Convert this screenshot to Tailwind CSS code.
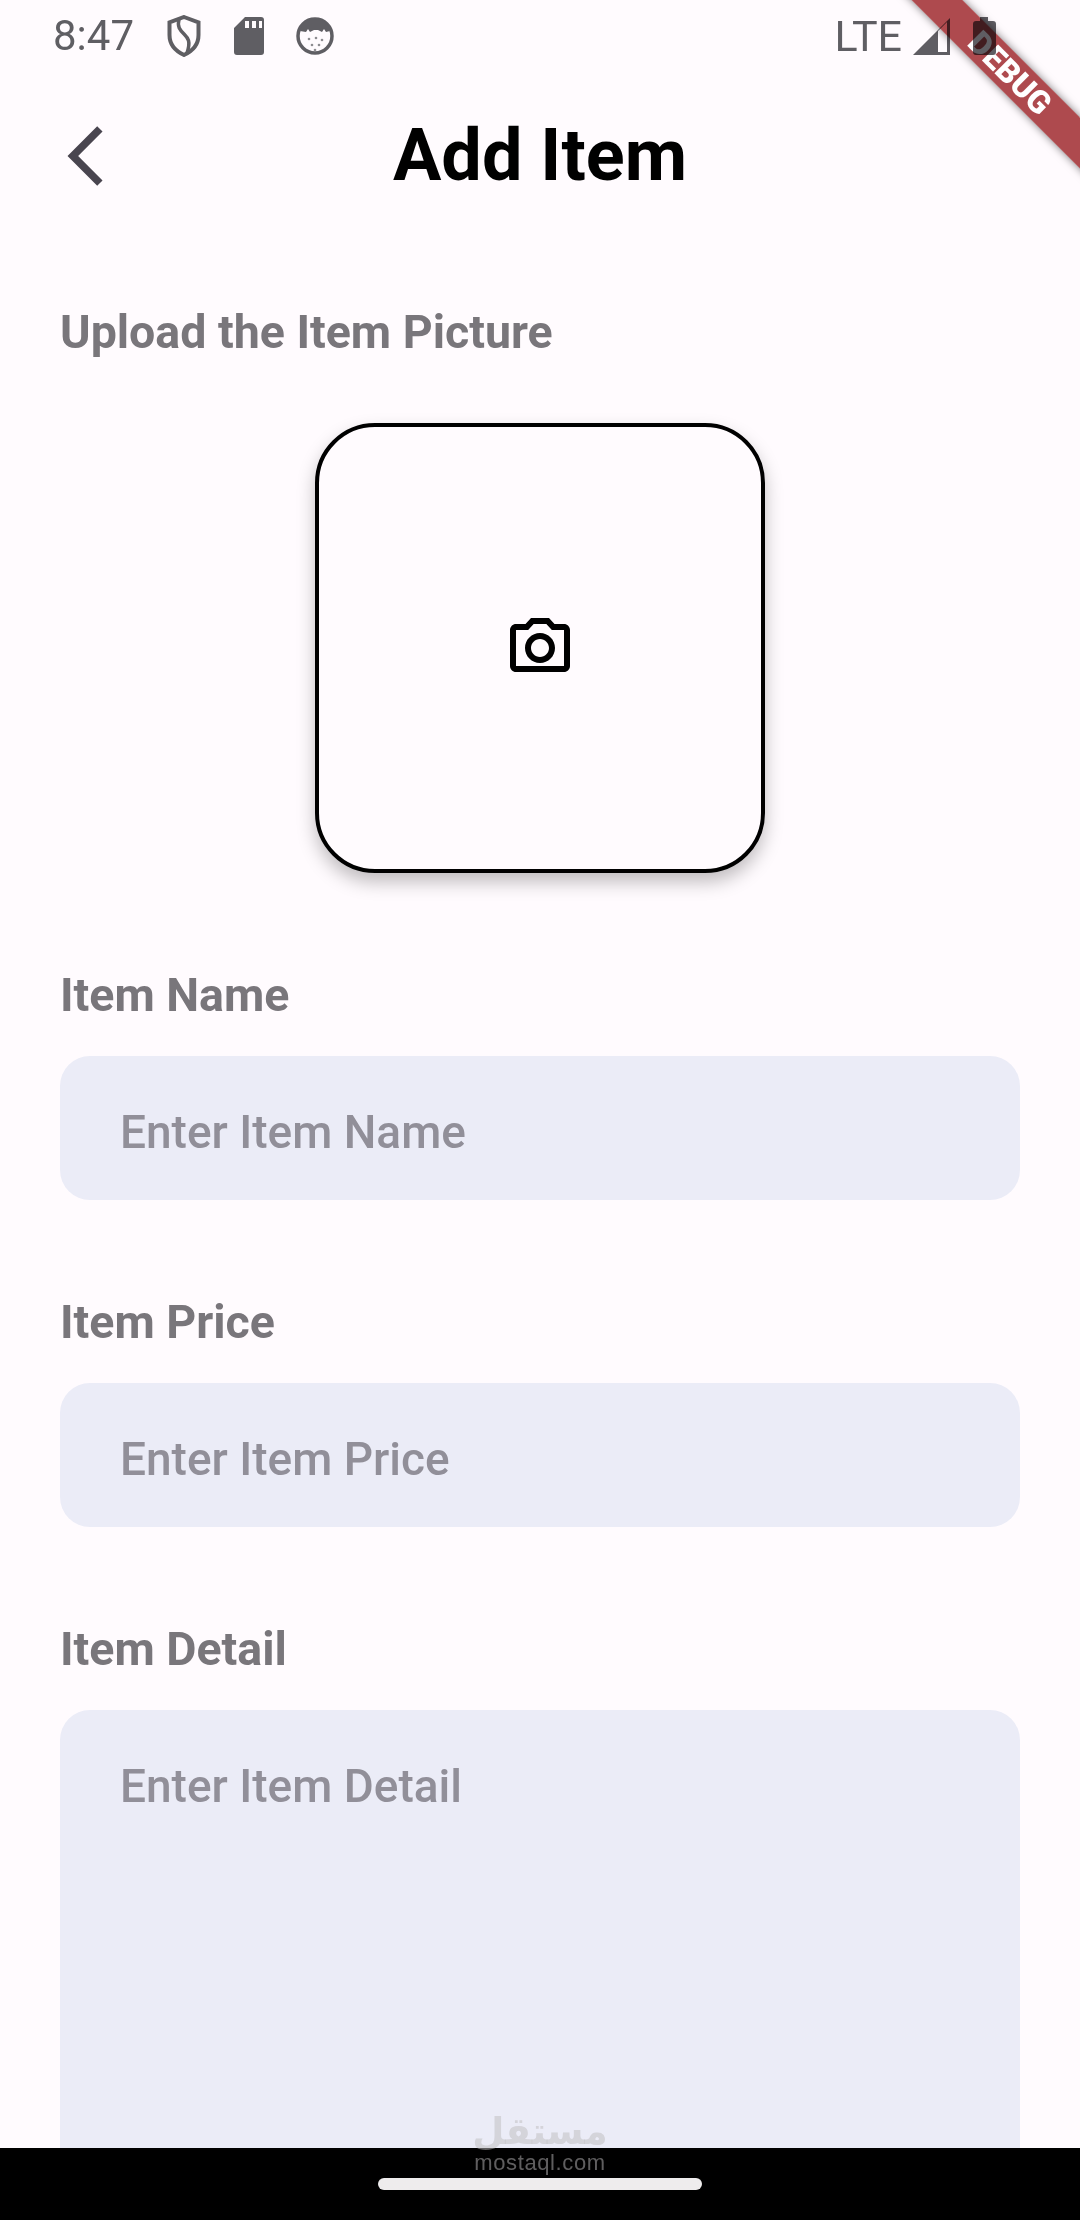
<!doctype html>
<html lang="en">
<head>
<meta charset="utf-8">
<script src="https://cdn.jsdelivr.net/npm/@tailwindcss/browser@4"></script>
<title>Add Item</title>
</head>
<body class="m-0">
<div class="relative w-[1080px] h-[2220px] overflow-hidden bg-[#fffbfe] font-['Roboto',sans-serif]">

  <!-- Debug banner -->
  <div class="absolute left-[810px] top-[55px] w-[400px] h-[36px] rotate-45 bg-[#9a1e22]/80 shadow-[0_0_9px_rgba(0,0,0,0.5)] flex items-center justify-center">
    <span class="text-[32px] leading-[36px] font-black text-white">DEBUG</span>
  </div>

  <!-- Status bar -->
  <div class="relative h-[72px] flex items-center justify-between pl-[53px] pr-[84px] text-[#5f5e63] text-[42px] leading-[72px]">
    <div class="flex items-center">
      <span class="w-[114px]">8:47</span>
      <svg class="w-[34px] h-[42px]" viewBox="0 0 34 42"><path d="M17 2 31.500 7.500V20c0 9-6 16-14.500 20C8.500 36 2.500 29 2.500 20V7.500Z" fill="none" stroke="#5f5e63" stroke-width="4"/><path d="M12 4c-2 8 1 11 5 15s7 7 3 19" fill="none" stroke="#5f5e63" stroke-width="3.500"/></svg>
      <svg class="w-[30px] h-[38px] ml-[33px]" viewBox="0 0 30 38"><path fill-rule="evenodd" d="M11 0H27a3 3 0 0 1 3 3V35a3 3 0 0 1-3 3H3a3 3 0 0 1-3-3V11ZM11 4v7h4V4Zm7 0v7h4V4Zm7 0v7h3V4Z" fill="#5f5e63"/></svg>
      <svg class="w-[38px] h-[38px] ml-[32px]" viewBox="0 0 38 38"><circle cx="19" cy="19" r="17" fill="#fffbfe" stroke="#5f5e63" stroke-width="3.500"/><path d="M4 14C6 6 12 2 19 2s13 4 15 12l-4 1-2-3-2 3-4-2h-4l-4 2-2-3-2 3Z" fill="#5f5e63"/><g fill="#8d8c90"><circle cx="13" cy="22" r="1.300"/><circle cx="20" cy="21" r="1.300"/><circle cx="26" cy="23" r="1.300"/><circle cx="16" cy="28" r="1.300"/><circle cx="23" cy="28" r="1.300"/><circle cx="19" cy="33" r="1.300"/></g></svg>
    </div>
    <div class="flex items-center">
      <span class="text-[43px]">LTE</span>
      <svg class="w-[38px] h-[38px] ml-[11px] mix-blend-multiply" viewBox="0 0 38 38"><path fill-rule="evenodd" d="M0 38 37 1V38ZM25 14V35H34V5Z" fill="#5f5e63"/></svg>
      <svg class="w-[23px] h-[38px] ml-[22px] mix-blend-multiply" viewBox="0 0 23 38"><path d="M7 0H15V4H20a3 3 0 0 1 3 3V35a3 3 0 0 1-3 3H3a3 3 0 0 1-3-3V7a3 3 0 0 1 3-3H7Z" fill="#5f5e63"/></svg>
    </div>
  </div>

  <!-- App bar -->
  <div class="relative mt-[48px] h-[72px] flex items-center justify-center">
    <svg class="absolute left-[50px] top-0 w-[72px] h-[72px]" viewBox="0 0 24 24"><path fill="#49454f" d="M17.51 3.87L15.73 2.1 5.84 12l9.9 9.9 1.77-1.77L9.38 12l8.13-8.130z"/></svg>
    <h1 class="m-0 text-[72px] leading-[72px] font-bold text-black">Add Item</h1>
  </div>

  <!-- Form -->
  <div class="mt-[110px] px-[60px]">
    <p class="m-0 text-[46.500px] leading-[60px] font-bold text-[#79767b]">Upload the Item Picture</p>

    <div class="mt-[61px] mx-auto w-[450px] h-[450px] flex items-center justify-center rounded-[60px] border-[4.500px] border-black bg-[#fffbfe] shadow-[0_9px_18px_rgba(0,0,0,0.25)]">
      <svg class="w-[72px] h-[72px]" viewBox="0 0 24 24"><path fill="#000" d="M14.12 4l1.83 2H20v12H4V6h4.050l1.830-2h4.240M15 2H9L7.170 4H4c-1.100 0-2 .9-2 2v12c0 1.100.9 2 2 2h16c1.100 0 2-.9 2-2V6c0-1.100-.9-2-2-2h-3.170L15 2zm-3 7c1.650 0 3 1.350 3 3s-1.350 3-3 3-3-1.350-3-3 1.350-3 3-3m0-2c-2.760 0-5 2.240-5 5s2.240 5 5 5 5-2.240 5-5-2.240-5-5-5z"/></svg>
    </div>

    <p class="mt-[92px] mb-0 text-[46.500px] leading-[60px] font-bold text-[#79767b]">Item Name</p>
    <div class="mt-[31px] h-[144px] rounded-[30px] bg-[#ebecf7] pl-[60px] pt-[46px] text-[46px] leading-[60px] font-medium text-[#918f99]">Enter Item Name</div>

    <p class="mt-[92px] mb-0 text-[46.500px] leading-[60px] font-bold text-[#79767b]">Item Price</p>
    <div class="mt-[31px] h-[144px] rounded-[30px] bg-[#ebecf7] pl-[60px] pt-[46px] text-[46px] leading-[60px] font-medium text-[#918f99]">Enter Item Price</div>

    <p class="mt-[92px] mb-0 text-[46.500px] leading-[60px] font-bold text-[#79767b]">Item Detail</p>
    <div class="mt-[31px] h-[480px] rounded-[30px] bg-[#ebecf7] pl-[60px] pt-[46px] text-[46px] leading-[60px] font-medium text-[#918f99]">Enter Item Detail</div>
  </div>

  <!-- Navigation bar -->
  <div class="absolute left-0 right-0 bottom-0 h-[72px] bg-black flex justify-center">
    <div class="mt-[30px] w-[324px] h-[12px] rounded-full bg-[#eeeced]"></div>
  </div>

  <!-- Watermark -->
  <div class="absolute left-[440px] top-[2112px] w-[200px] flex flex-col items-center text-[#bdbbbd]/50">
    <span class="text-[37px] leading-[40px] font-bold font-['DejaVu_Sans',sans-serif]">مستقل</span>
    <span class="text-[22px] leading-[22px] tracking-[0.6px] font-['Liberation_Sans',sans-serif]">mostaql.com</span>
  </div>
</div>
</body>
</html>
